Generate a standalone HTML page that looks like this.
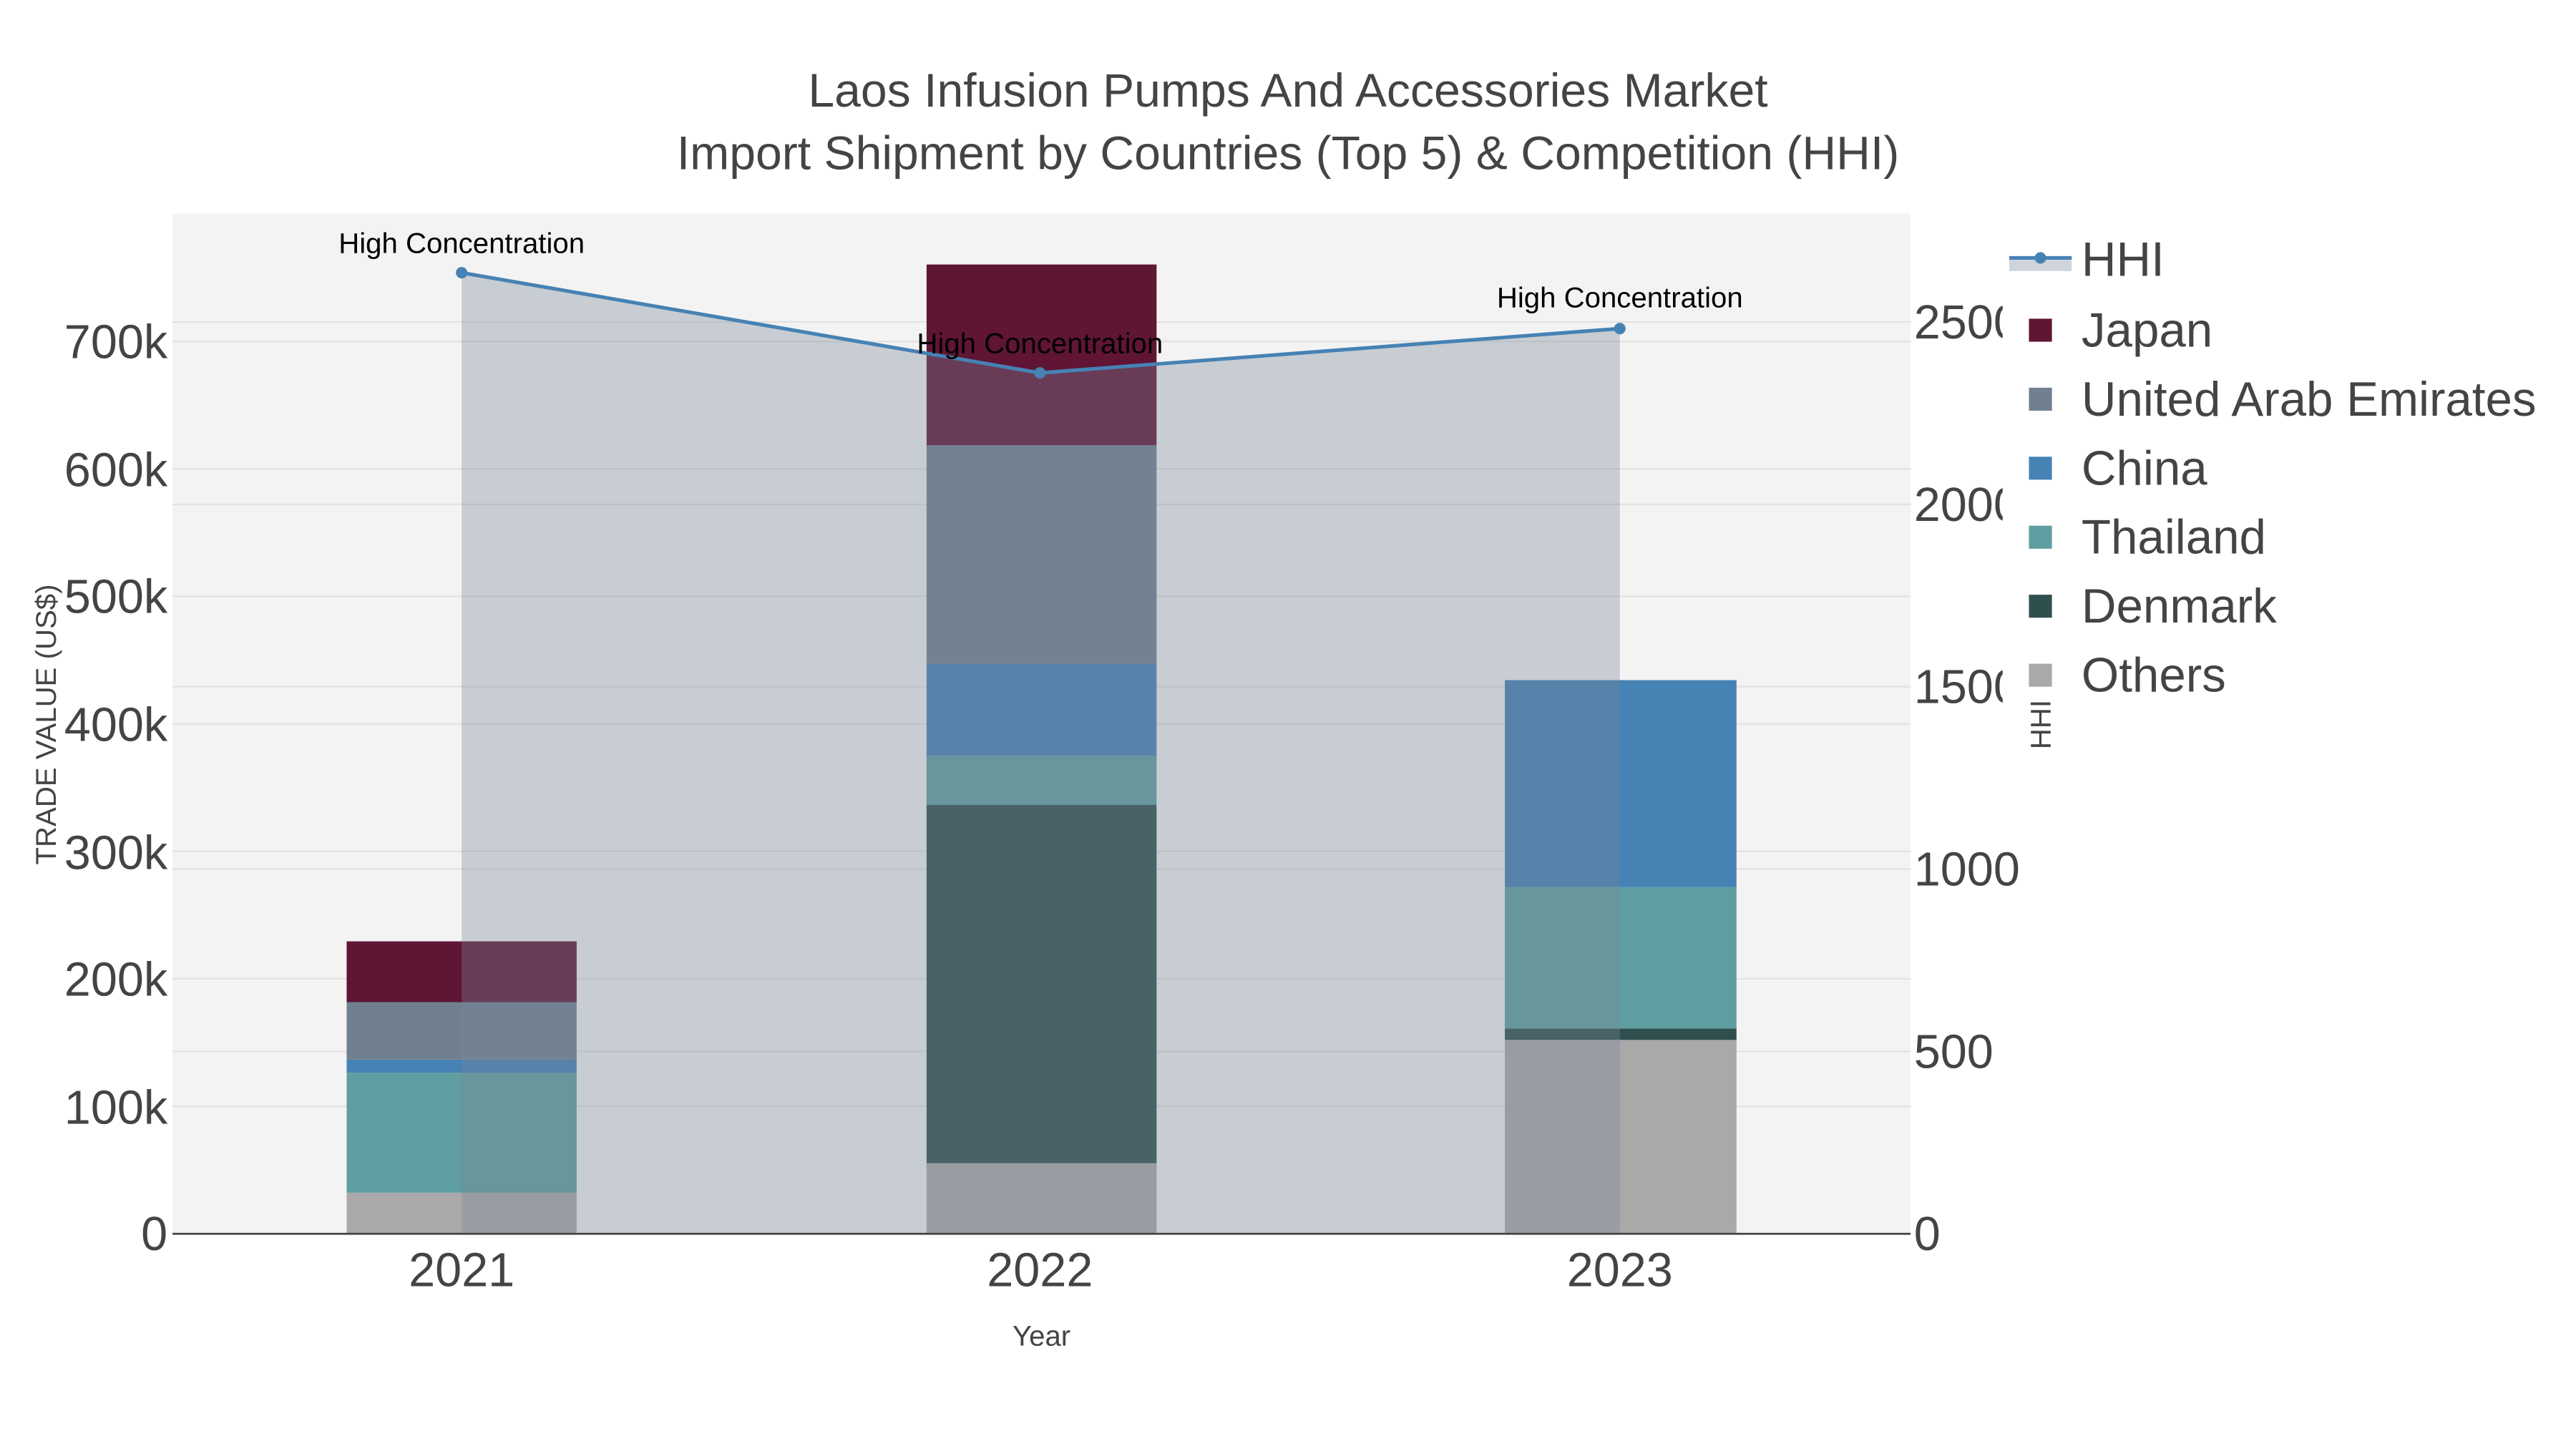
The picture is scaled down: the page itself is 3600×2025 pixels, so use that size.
<!DOCTYPE html>
<html><head><meta charset="utf-8"><style>html,body{margin:0;padding:0;background:#fff}svg{display:block}text{font-family:"Liberation Sans",sans-serif}</style></head>
<body>
<svg width="3600" height="2025" viewBox="0 0 1568 882" xmlns="http://www.w3.org/2000/svg">
<rect width="1568" height="882" fill="#fff"/>
<rect x="105" y="130" width="1058" height="621" fill="#f3f3f3"/>
<g stroke="#e2e2e2" stroke-width="1">
<line x1="105" x2="1163" y1="673.4" y2="673.4"/><line x1="105" x2="1163" y1="595.8" y2="595.8"/>
<line x1="105" x2="1163" y1="518.2" y2="518.2"/><line x1="105" x2="1163" y1="440.6" y2="440.6"/>
<line x1="105" x2="1163" y1="363" y2="363"/><line x1="105" x2="1163" y1="285.4" y2="285.4"/>
<line x1="105" x2="1163" y1="207.8" y2="207.8"/>
<line x1="105" x2="1163" y1="640" y2="640"/><line x1="105" x2="1163" y1="529" y2="529"/>
<line x1="105" x2="1163" y1="418" y2="418"/><line x1="105" x2="1163" y1="307" y2="307"/>
<line x1="105" x2="1163" y1="196" y2="196"/>
</g>
<rect x="211" y="726" width="140" height="25" fill="#a9a9a9"/>
<rect x="211" y="653" width="140" height="73" fill="#5f9ea0"/>
<rect x="211" y="645" width="140" height="8" fill="#4682b4"/>
<rect x="211" y="610" width="140" height="35" fill="#708090"/>
<rect x="211" y="573" width="140" height="37" fill="#601535"/>
<rect x="564" y="708" width="140" height="43" fill="#a9a9a9"/>
<rect x="564" y="490" width="140" height="218" fill="#2f4f4f"/>
<rect x="564" y="460" width="140" height="30" fill="#5f9ea0"/>
<rect x="564" y="404" width="140" height="56" fill="#4682b4"/>
<rect x="564" y="271" width="140" height="133" fill="#708090"/>
<rect x="564" y="161" width="140" height="110" fill="#601535"/>
<rect x="916" y="633" width="141" height="118" fill="#a9a9a9"/>
<rect x="916" y="626" width="141" height="7" fill="#2f4f4f"/>
<rect x="916" y="540" width="141" height="86" fill="#5f9ea0"/>
<rect x="916" y="414" width="141" height="126" fill="#4682b4"/>
<polygon points="281,166 633,227 986,200 986,751 281,751" fill="rgba(119,136,153,0.35)"/>
<polyline points="281,166 633,227 986,200" fill="none" stroke="#4682b4" stroke-width="2.2"/>
<circle cx="281" cy="166" r="3.5" fill="#4682b4"/><circle cx="633" cy="227" r="3.5" fill="#4682b4"/><circle cx="986" cy="200" r="3.5" fill="#4682b4"/>
<line x1="105" x2="1163" y1="751" y2="751" stroke="#444" stroke-width="1.2"/>
<g font-size="17.5" fill="#000" text-anchor="middle">
<text x="281" y="154">High Concentration</text>
<text x="633" y="215">High Concentration</text>
<text x="986" y="187">High Concentration</text>
</g>
<g font-size="28.8" fill="#444" text-anchor="middle">
<text x="784" y="65">Laos Infusion Pumps And Accessories Market</text>
<text x="784" y="103">Import Shipment by Countries (Top 5) &amp; Competition (HHI)</text>
</g>
<g font-size="29" fill="#444" text-anchor="end">
<text x="102" y="761">0</text><text x="102" y="684">100k</text><text x="102" y="606">200k</text>
<text x="102" y="529">300k</text><text x="102" y="451">400k</text><text x="102" y="373">500k</text>
<text x="102" y="296">600k</text><text x="102" y="218">700k</text>
</g>
<g font-size="29" fill="#444" text-anchor="middle">
<text x="281" y="783">2021</text><text x="633" y="783">2022</text><text x="986" y="783">2023</text>
</g>
<clipPath id="rc"><rect x="1160" y="130" width="59" height="310"/><rect x="1160" y="440" width="100" height="340"/></clipPath>
<g font-size="29" fill="#444" clip-path="url(#rc)">
<text x="1165" y="761">0</text><text x="1165" y="650">500</text><text x="1165" y="539">1000</text>
<text x="1165" y="428">1500</text><text x="1165" y="317">2000</text><text x="1165" y="206">2500</text>
</g>
<text x="634" y="819" font-size="17.5" fill="#444" text-anchor="middle">Year</text>
<text transform="translate(34,441) rotate(-90)" font-size="17.5" fill="#444" text-anchor="middle">TRADE VALUE (US$)</text>
<text transform="translate(1248,441) rotate(-90)" font-size="17.5" fill="#444" text-anchor="middle">HHI</text>
<rect x="1223" y="156" width="38" height="9" fill="rgba(119,136,153,0.35)"/>
<line x1="1223" x2="1261" y1="157" y2="157" stroke="#4682b4" stroke-width="2.2"/>
<circle cx="1242" cy="157" r="3.5" fill="#4682b4"/>
<rect x="1235" y="194" width="14" height="14" fill="#601535"/>
<rect x="1235" y="236" width="14" height="14" fill="#708090"/>
<rect x="1235" y="278" width="14" height="14" fill="#4682b4"/>
<rect x="1235" y="320" width="14" height="14" fill="#5f9ea0"/>
<rect x="1235" y="362" width="14" height="14" fill="#2f4f4f"/>
<rect x="1235" y="404" width="14" height="14" fill="#a9a9a9"/>
<g font-size="29.3" fill="#444">
<text x="1267" y="168">HHI</text><text x="1267" y="211">Japan</text><text x="1267" y="253">United Arab Emirates</text>
<text x="1267" y="295">China</text><text x="1267" y="337">Thailand</text><text x="1267" y="379">Denmark</text><text x="1267" y="421">Others</text>
</g>
</svg>
</body></html>
